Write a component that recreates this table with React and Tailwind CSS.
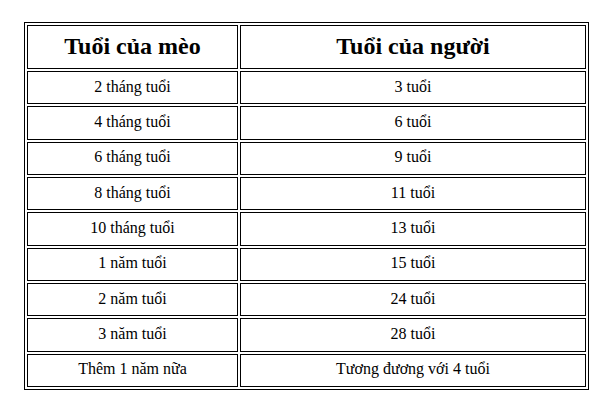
export default function App() {
  const rows = [
    ["2 tháng tuổi", "3 tuổi"],
    ["4 tháng tuổi", "6 tuổi"],
    ["6 tháng tuổi", "9 tuổi"],
    ["8 tháng tuổi", "11 tuổi"],
    ["10 tháng tuổi", "13 tuổi"],
    ["1 năm tuổi", "15 tuổi"],
    ["2 năm tuổi", "24 tuổi"],
    ["3 năm tuổi", "28 tuổi"],
    ["Thêm 1 năm nữa", "Tương đương với 4 tuổi"],
  ];
  const cell = "border border-black flex items-center justify-center text-black pb-[2px]";
  return (
    <div className="w-[611px] h-[417px] bg-white pt-[22px] pl-[24px] font-['Liberation_Serif','Times_New_Roman',serif]">
      <div className="w-[565px] h-[368px] border border-black p-[2px] grid grid-cols-[211px_346px] grid-rows-[44px_repeat(9,1fr)] gap-[2px]">
        <div className={cell + " text-[24px] font-bold"}>Tuổi của mèo</div>
        <div className={cell + " text-[24px] font-bold"}>Tuổi của người</div>
        {rows.map(([a, b]) => [
          <div key={a} className={cell + " text-[16px]"}>{a}</div>,
          <div key={a + "-b"} className={cell + " text-[16px]"}>{b}</div>,
        ])}
      </div>
    </div>
  );
}
